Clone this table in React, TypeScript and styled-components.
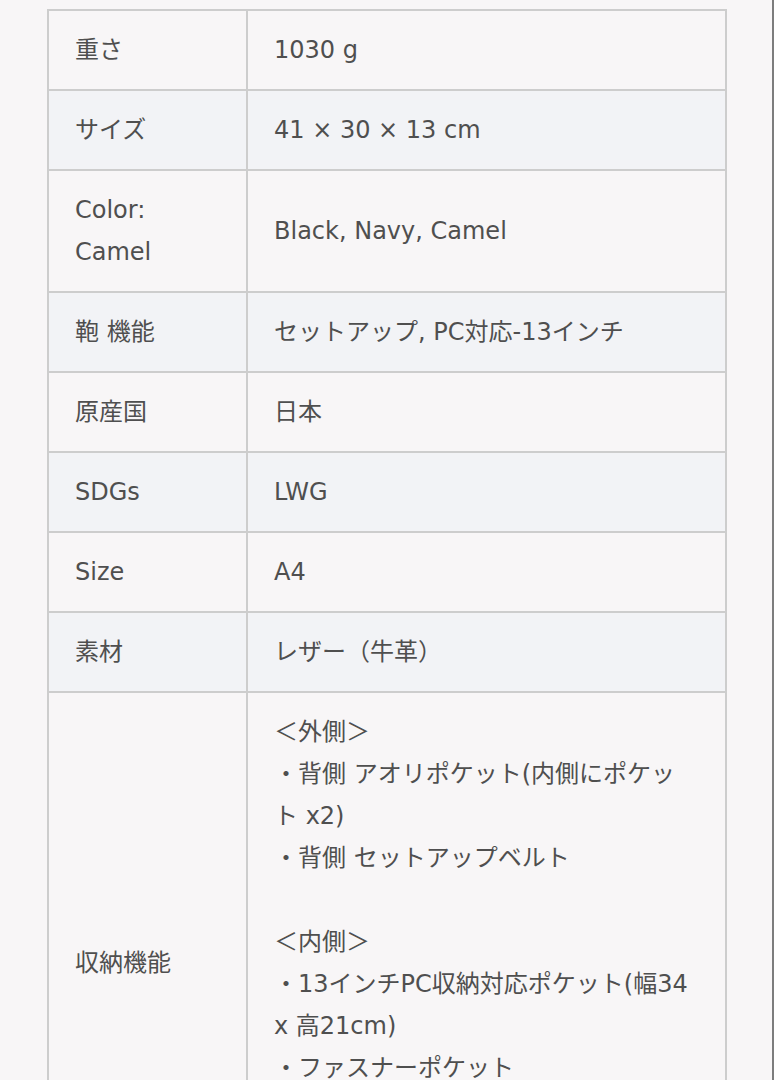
import React from 'react';
import styled, { createGlobalStyle } from 'styled-components';

interface SpecRow {
  label: React.ReactNode;
  value: React.ReactNode;
}

interface CellProps {
  striped?: boolean;
}

const GlobalStyle = createGlobalStyle`
  html, body {
    margin: 0;
    padding: 0;
    background: #f8f6f7;
  }
`;

const rows: SpecRow[] = [
  { label: '重さ', value: '1030 g' },
  { label: 'サイズ', value: '41 × 30 × 13 cm' },
  {
    label: (
      <>
        Color:
        <br />
        Camel
      </>
    ),
    value: 'Black, Navy, Camel',
  },
  { label: '鞄 機能', value: 'セットアップ, PC対応-13インチ' },
  { label: '原産国', value: '日本' },
  { label: 'SDGs', value: 'LWG' },
  { label: 'Size', value: 'A4' },
  { label: '素材', value: 'レザー（牛革）' },
  {
    label: '収納機能',
    value: (
      <>
        ＜外側＞
        <br />
        ・背側 アオリポケット(内側にポケット x2)
        <br />
        ・背側 セットアップベルト
        <br />
        <br />
        ＜内側＞
        <br />
        ・13インチPC収納対応ポケット(幅34 x 高21cm)
        <br />
        ・ファスナーポケット
        <br />
        ・オープンポケット x2
        <br />
        ・ペンホルダー
        <br />
        ・キーフック
      </>
    ),
  },
];

const App: React.FC = () => {
  return (
    <Page>
      <GlobalStyle />
      <SpecTable>
        <tbody>
          {rows.map((row, i) => (
            <tr key={i}>
              <Label striped={i % 2 === 1}>{row.label}</Label>
              <Value striped={i % 2 === 1}>{row.value}</Value>
            </tr>
          ))}
        </tbody>
      </SpecTable>
    </Page>
  );
};

const Page = styled.div`
  min-height: 1080px;
  box-sizing: border-box;
  padding: 9px 45px 40px 47px;
  border-right: 2px solid #7d7d7d;
  font-family: 'DejaVu Sans', 'Noto Sans CJK JP', sans-serif;
  color: #4f4f4f;
`;

const SpecTable = styled.table`
  width: 100%;
  border-collapse: collapse;
  table-layout: fixed;
  border: 2px solid #cdcdcd;
`;

const Cell = styled.td<CellProps>`
  border: 2px solid #cdcdcd;
  padding: 18px 26px;
  font-size: 24px;
  line-height: 42px;
  vertical-align: middle;
  background: ${({ striped }) => (striped ? '#f2f3f6' : '#f8f6f7')};
`;

const Label = styled(Cell)`
  width: 145px;
`;

const Value = styled(Cell)`
  padding-right: 28px;
`;

export default App;
